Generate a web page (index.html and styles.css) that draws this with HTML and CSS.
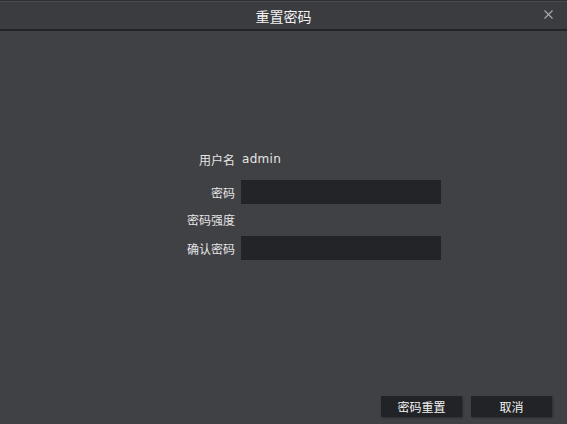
FILE: index.html
```html
<!DOCTYPE html>
<html lang="zh">
<head>
<meta charset="utf-8">
<title>重置密码</title>
<link rel="stylesheet" href="styles.css">
</head>
<body>
<div class="dialog">
  <div class="titlebar">
    <span class="title">重置密码</span>
    <span class="close">
      <svg width="9" height="9" viewBox="0 0 9 9"><path d="M0.5 0.5L8.5 8.5M8.5 0.5L0.5 8.5" stroke="#a9aaad" stroke-width="1.1" fill="none"/></svg>
    </span>
  </div>
  <div class="content">
    <div class="form">
      <div class="row row-user">
        <span class="label">用户名</span>
        <span class="value">admin</span>
      </div>
      <div class="row row-pwd">
        <span class="label">密码</span>
        <span class="input"></span>
      </div>
      <div class="row row-strength">
        <span class="label">密码强度</span>
      </div>
      <div class="row row-confirm">
        <span class="label">确认密码</span>
        <span class="input"></span>
      </div>
    </div>
  </div>
  <div class="footer">
    <button class="btn">密码重置</button>
    <button class="btn">取消</button>
  </div>
</div>
</body>
</html>
```

FILE: styles.css
```css
html, body {
  margin: 0;
  padding: 0;
  background: #404145;
}
body {
  width: 567px;
  height: 424px;
  overflow: hidden;
  font-family: "Noto Sans CJK SC", "Noto Sans", sans-serif;
  color: #e6e6e6;
  font-size: 12px;
}
.dialog {
  width: 567px;
  height: 424px;
  display: flex;
  flex-direction: column;
  background: #404145;
}
.titlebar {
  height: 28px;
  border-top: 1px solid #2e2f32;
  box-shadow: inset 0 1px 0 #4b4c50;
  border-bottom: 2px solid #232427;
  background: #3b3c40;
  display: flex;
  align-items: center;
  justify-content: center;
  position: relative;
}
.title {
  font-size: 14px;
  color: #f2f2f2;
  line-height: 1;
  margin-top: 2px;
}
.close {
  position: absolute;
  right: 14px;
  top: 9px;
  width: 9px;
  height: 9px;
  display: block;
}
.close svg { display: block; }
.content {
  flex: 1;
  padding-top: 117px;
}
.form {
  display: flex;
  flex-direction: column;
}
.row {
  display: flex;
  align-items: center;
}
.label {
  width: 241px;
  text-align: right;
  padding-right: 6px;
  box-sizing: border-box;
  white-space: nowrap;
}
.value {
  padding-left: 1px;
  font-family: "DejaVu Sans", sans-serif;
  font-size: 12px;
  letter-spacing: 0.3px;
}
.row-user { height: 22px; }
.row-pwd { height: 24px; margin-top: 10px; }
.row-strength { height: 22px; margin-top: 4px; }
.row-confirm { height: 24px; margin-top: 6px; }
.input {
  display: block;
  width: 200px;
  height: 24px;
  background: #222427;
}
.footer {
  display: flex;
  justify-content: flex-end;
  gap: 9px;
  padding: 0 15px 7px 0;
}
.btn {
  width: 81px;
  height: 21px;
  border: none;
  padding: 0;
  margin: 0;
  background: #222326;
  color: #f2f2f2;
  font-family: "Noto Sans CJK SC", sans-serif;
  font-size: 12px;
  box-shadow: 1px 1px 2px rgba(0,0,0,0.3);
}
```
